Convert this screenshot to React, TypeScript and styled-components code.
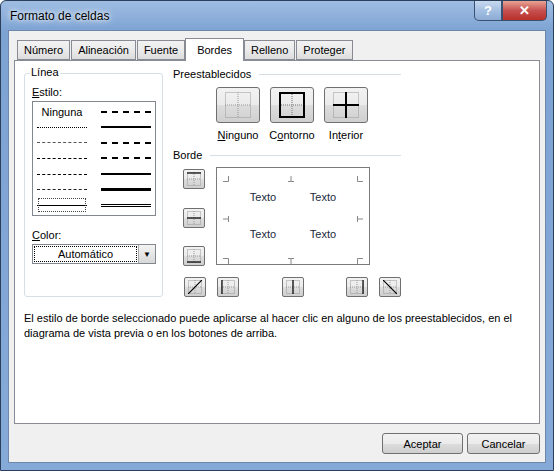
import React from "react";
import styled, { createGlobalStyle } from "styled-components";

const G = createGlobalStyle`
  html,body{margin:0;padding:0;background:#fff;}
  body{font-family:"Liberation Sans",Tahoma,sans-serif;font-size:11px;color:#000;}
`;
const Win = styled.div`
  width:554px;height:471px;box-sizing:border-box;border:1px solid #2b3f5c;border-radius:6px 6px 0 0;
  background:linear-gradient(180deg,#9fbde2 0px,#7da3d3 30px,#86aad8 100%);
  padding:0 7px 7px 7px;display:flex;flex-direction:column;position:relative;
`;
const Title = styled.div`
  height:29px;display:flex;align-items:center;padding-left:2px;font-size:12px;
  color:#000;text-shadow:0 0 8px #fff,0 0 4px #fff;
`;
const Ctrls = styled.div`position:absolute;top:0;right:6px;display:flex;`;
const CBtn = styled.div<{ red?: boolean }>`
  width:${p=>p.red?43:26}px;height:19px;border:1px solid #3b5170;border-top:none;
  border-radius:${p=>p.red?"0 0 5px 0":"0 0 0 5px"};color:#fff;font-weight:bold;font-size:13px;
  display:flex;align-items:center;justify-content:center;
  background:${p=>p.red?"linear-gradient(#e8a493,#c75050 50%,#b8302a)":"linear-gradient(#c8d9ee,#a4bfe2 50%,#8cabd5)"};
`;
const Body = styled.div`flex:1;background:#f0f0f0;border:1px solid #6f87a8;padding:6px 5px 8px 5px;display:flex;flex-direction:column;`;
const Tabs = styled.div`display:flex;align-items:flex-end;height:23px;padding-left:3px;gap:1px;`;
const Tab = styled.div<{ on?: boolean }>`
  height:${p=>p.on?23:20}px;padding:0 ${p=>p.on?11:6}px;box-sizing:border-box;display:flex;align-items:center;
  border:1px solid #898c95;border-bottom:${p=>p.on?"none":"1px solid #898c95"};
  background:${p=>p.on?"#fff":"linear-gradient(#f2f2f2,#ebebeb 50%,#dcdcdc)"};
  margin:${p=>p.on?"0 -1px -1px -1px":"0"};position:relative;z-index:${p=>p.on?2:1};
`;
const Panel = styled.div`
  height:364px;background:#fff;border:1px solid #898c95;box-sizing:border-box;padding:12px 9px 0 9px;
  display:flex;flex-direction:column;
`;
const Row = styled.div`display:flex;gap:10px;`;
const Group = styled.div`
  width:140px;height:224px;box-sizing:border-box;border:1px solid #d5dfe5;border-radius:3px;position:relative;padding:12px 6px 0 7px;
`;
const Legend = styled.span`position:absolute;top:-8px;left:5px;background:#fff;padding:0 1px;`;
const Lab = styled.div`margin-bottom:3px;u{text-decoration:underline;}`;
const StyleBox = styled.div`
  width:124px;height:115px;box-sizing:border-box;border:1px solid #828790;display:grid;
  grid-template-columns:1fr 1fr;grid-template-rows:repeat(7,1fr);padding:2px 4px;column-gap:14px;
`;
const Cell = styled.div<{ sel?: boolean }>`
  display:flex;align-items:center;justify-content:center;${p=>p.sel?"outline:1px dotted #444;outline-offset:-2px;":""}
`;
const Ln = styled.div<{ b: string }>`width:100%;border-top:${p=>p.b};`;
const Combo = styled.div`
  margin-top:3px;width:124px;height:20px;box-sizing:border-box;border:1px solid #828790;display:flex;
`;
const ComboTxt = styled.div`flex:1;display:flex;align-items:center;justify-content:center;border:1px dotted #000;margin:1px;`;
const ComboBtn = styled.div`width:16px;border-left:1px solid #aaa;background:linear-gradient(#f4f4f4,#d8d8d8);display:flex;align-items:center;justify-content:center;font-size:8px;`;
const Right = styled.div`flex:1;padding-right:130px;`;
const Sect = styled.div`display:flex;align-items:center;gap:8px;&::after{content:"";flex:1;border-top:1px solid #d5dfe5;}`;
const Presets = styled.div`display:flex;gap:10px;padding-left:43px;margin-top:7px;`;
const Preset = styled.div`display:flex;flex-direction:column;align-items:center;gap:6px;width:44px;white-space:nowrap;u{text-decoration:underline;}`;
const PBtn = styled.div`
  width:44px;height:36px;box-sizing:border-box;border:1px solid #707070;border-radius:3px;
  background:linear-gradient(#f2f2f2,#ebebeb 50%,#dddddd 51%,#cfcfcf);display:flex;align-items:center;justify-content:center;
`;
const BGrid = styled.div`display:grid;grid-template-columns:33px 1fr;margin-top:6px;margin-left:10px;`;
const LeftBtns = styled.div`display:flex;flex-direction:column;justify-content:space-between;padding:2px 0 7px 0;height:97px;`;
const SBtn = styled.div`
  width:22px;height:20px;box-sizing:border-box;border:1px solid #707070;border-radius:2px;
  background:linear-gradient(#f2f2f2,#ebebeb 50%,#dddddd 51%,#cfcfcf);display:flex;align-items:center;justify-content:center;
`;
const Preview = styled.div`
  width:154px;height:98px;box-sizing:border-box;border:1px solid #7a7a7a;position:relative;
  display:grid;grid-template-columns:1fr 1fr;align-items:center;justify-items:center;padding:10px 16px 12px 16px;color:#1a2a40;
`;
const Tick = styled.div`position:absolute;width:6px;height:6px;`;
const BottomBtns = styled.div`grid-column:2;display:flex;margin-top:4px;margin-left:-32px;`;
const Desc = styled.div`margin-top:14px;line-height:15px;`;
const Foot = styled.div`display:flex;justify-content:flex-end;gap:4px;margin-top:9px;`;
const Btn = styled.div<{ w: number }>`
  width:${p=>p.w}px;height:21px;box-sizing:border-box;border:1px solid #707070;border-radius:3px;
  background:linear-gradient(#f2f2f2,#ebebeb 50%,#dddddd 51%,#cfcfcf);display:flex;align-items:center;justify-content:center;
`;

const Dots = ({ w, h, inner = true }: { w: number; h: number; inner?: boolean }) => (
  <g stroke="#999" strokeDasharray="1 1" fill="none">
    <rect x={0.5} y={0.5} width={w - 1} height={h - 1} />
    {inner && <line x1={w / 2} y1={0} x2={w / 2} y2={h} />}
    {inner && <line x1={0} y1={h / 2} x2={w} y2={h / 2} />}
  </g>
);
const PIcon = ({ k }: { k: number }) => (
  <svg width="26" height="26" viewBox="0 0 26 26">
    <Dots w={26} h={26} inner={k !== 2} />
    {k === 1 && <rect x={1} y={1} width={24} height={24} fill="none" stroke="#000" strokeWidth={2} />}
    {k === 1 && <g stroke="#999" strokeDasharray="1 1"><line x1={13} y1={2} x2={13} y2={24} /><line x1={2} y1={13} x2={24} y2={13} /></g>}
    {k === 2 && <g stroke="#000" strokeWidth={2}><line x1={13} y1={0} x2={13} y2={26} /><line x1={0} y1={13} x2={26} y2={13} /></g>}
  </svg>
);
const SIcon = ({ k }: { k: string }) => (
  <svg width="14" height="14" viewBox="0 0 14 14">
    <Dots w={14} h={14} />
    <g stroke="#000" strokeWidth={1.2}>
      {k === "t" && <line x1={0} y1={1} x2={14} y2={1} />}
      {k === "m" && <line x1={0} y1={7} x2={14} y2={7} />}
      {k === "b" && <line x1={0} y1={13} x2={14} y2={13} />}
      {k === "l" && <line x1={1} y1={0} x2={1} y2={14} />}
      {k === "c" && <line x1={7} y1={0} x2={7} y2={14} />}
      {k === "r" && <line x1={13} y1={0} x2={13} y2={14} />}
      {k === "d1" && <line x1={0} y1={14} x2={14} y2={0} />}
      {k === "d2" && <line x1={0} y1={0} x2={14} y2={14} />}
    </g>
  </svg>
);
const T = ({ x, y, d }: { x: number; y: number; d: string }) => (
  <Tick style={{ left: x, top: y }}>
    <svg width="6" height="6"><path d={d} stroke="#888" fill="none" /></svg>
  </Tick>
);

const lines = [
  "none", "2px dashed #000",
  "1px dotted #000", "2px solid #000",
  "1px dashed #555", "2px dashed #000",
  "1px dashed #000", "2px dashed #000",
  "1px dashed #000", "2px solid #000",
  "1px dashed #222", "3px solid #000",
  "1px solid #000", "3px double #000",
];

export default function App() {
  return (
    <>
      <G />
      <Win>
        <Title>Formato de celdas</Title>
        <Ctrls><CBtn>?</CBtn><CBtn red>✕</CBtn></Ctrls>
        <Body>
          <Tabs>
            {["Número", "Alineación", "Fuente", "Bordes", "Relleno", "Proteger"].map(t => (
              <Tab key={t} on={t === "Bordes"}>{t}</Tab>
            ))}
          </Tabs>
          <Panel>
            <Row>
              <Group>
                <Legend>Línea</Legend>
                <Lab><u>E</u>stilo:</Lab>
                <StyleBox>
                  {lines.map((b, i) => (
                    <Cell key={i} sel={i === 12}>
                      {i === 0 ? <span>Ninguna</span> : <Ln b={b} />}
                    </Cell>
                  ))}
                </StyleBox>
                <Lab style={{ marginTop: 13 }}><u>C</u>olor:</Lab>
                <Combo><ComboTxt>Automático</ComboTxt><ComboBtn>▼</ComboBtn></Combo>
              </Group>
              <Right>
                <Sect style={{ marginTop: -5 }}>Preestablecidos</Sect>
                <Presets>
                  <Preset><PBtn><PIcon k={0} /></PBtn><span><u>N</u>inguno</span></Preset>
                  <Preset><PBtn><PIcon k={1} /></PBtn><span>C<u>o</u>ntorno</span></Preset>
                  <Preset><PBtn><PIcon k={2} /></PBtn><span>In<u>t</u>erior</span></Preset>
                </Presets>
                <Sect style={{ marginTop: 8 }}>Borde</Sect>
                <BGrid>
                  <LeftBtns>
                    <SBtn><SIcon k="t" /></SBtn>
                    <SBtn><SIcon k="m" /></SBtn>
                    <SBtn><SIcon k="b" /></SBtn>
                  </LeftBtns>
                  <Preview>
                    <span>Texto</span><span>Texto</span><span>Texto</span><span>Texto</span>
                    <T x={6} y={4} d="M5.5 0V5.5H0" />
                    <T x={71} y={4} d="M3 0V5.5M0 5.5H6" />
                    <T x={140} y={4} d="M0.5 0V5.5H6" />
                    <T x={6} y={44} d="M5.5 0V6M0 3H6" />
                    <T x={140} y={44} d="M0.5 0V6M0 3H6" />
                    <T x={6} y={86} d="M0 0.5H5.5V6" />
                    <T x={71} y={86} d="M0 0.5H6M3 0V6" />
                    <T x={140} y={86} d="M6 0.5H0.5V6" />
                  </Preview>
                  <BottomBtns>
                    <SBtn><SIcon k="d1" /></SBtn>
                    <SBtn style={{ marginLeft: 11 }}><SIcon k="l" /></SBtn>
                    <SBtn style={{ marginLeft: 43 }}><SIcon k="c" /></SBtn>
                    <SBtn style={{ marginLeft: 42 }}><SIcon k="r" /></SBtn>
                    <SBtn style={{ marginLeft: 11 }}><SIcon k="d2" /></SBtn>
                  </BottomBtns>
                </BGrid>
              </Right>
            </Row>
            <Desc>
              El estilo de borde seleccionado puede aplicarse al hacer clic en alguno de los preestablecidos, en el<br />
              diagrama de vista previa o en los botones de arriba.
            </Desc>
          </Panel>
          <Foot><Btn w={81}>Aceptar</Btn><Btn w={73}>Cancelar</Btn></Foot>
        </Body>
      </Win>
    </>
  );
}
